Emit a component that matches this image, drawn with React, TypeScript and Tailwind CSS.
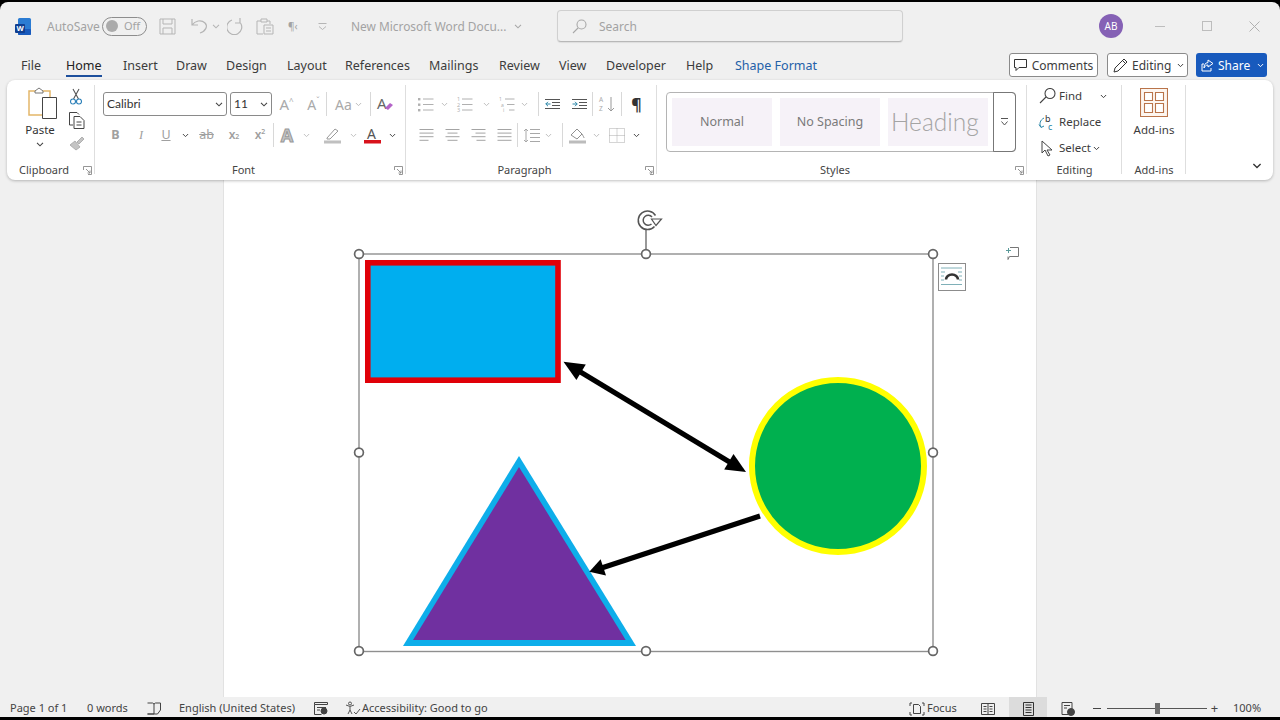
import React from "react";
import { clsx } from "clsx";

const TABS = [
  { name: "File", w: "w-[45px]" },
  { name: "Home", w: "w-[57px]" },
  { name: "Insert", w: "w-[53px]" },
  { name: "Draw", w: "w-[50px]" },
  { name: "Design", w: "w-[61px]" },
  { name: "Layout", w: "w-[58px]" },
  { name: "References", w: "w-[84px]" },
  { name: "Mailings", w: "w-[70px]" },
  { name: "Review", w: "w-[60px]" },
  { name: "View", w: "w-[47px]" },
  { name: "Developer", w: "w-[80px]" },
  { name: "Help", w: "w-[49px]" },
];

const Chev: React.FC<{ className?: string }> = ({ className }) => (
  <svg width="8" height="5" viewBox="0 0 8 5" fill="none" stroke="currentColor" strokeWidth="1.1" className={clsx("shrink-0", className)}>
    <path d="M1 .8l3 3 3-3" />
  </svg>
);

const Cell: React.FC<{ className?: string; children?: React.ReactNode }> = ({ className, children }) => (
  <div className={clsx("flex items-center justify-center shrink-0 h-[24px]", className)}>{children}</div>
);

const Sep = () => <div className="w-px h-[24px] bg-[#d8d8d8] shrink-0" />;

const Launcher = () => (
  <svg width="9" height="9" viewBox="0 0 9 9" fill="none" stroke="#8a8a8a" strokeWidth=".9">
    <path d="M.5 4V.5h8v8H5M3 3l4 4M7 4.5V7H4.5" />
  </svg>
);

const Group: React.FC<{ label: string; className: string; launcher?: boolean; labelClass?: string; children: React.ReactNode }> = ({ label, className, launcher, labelClass, children }) => (
  <div className={clsx("relative flex flex-col shrink-0 h-full", className)}>
    <div className="flex-1 min-h-0">{children}</div>
    <div className="flex h-[20px] items-center text-[11px] text-[#444]">
      <span className={clsx("flex-1", labelClass ?? "text-center")}>{label}</span>
      {launcher && <span className="w-[14px] flex justify-end pr-[3px]"><Launcher /></span>}
    </div>
    <div className="absolute right-0 top-[5px] bottom-[6px] w-px bg-[#dedede]" />
  </div>
);

const Lines: React.FC<{ kind: "left" | "center" | "right" | "just" }> = ({ kind }) => {
  const rows = [[0, 14], [kind === "just" ? 0 : kind === "center" ? 2 : kind === "right" ? 4 : 0, kind === "just" ? 14 : kind === "center" ? 12 : 14], [0, 14], [kind === "left" ? 0 : kind === "center" ? 2 : kind === "right" ? 5 : 0, kind === "left" ? 9 : kind === "center" ? 12 : 14]];
  return (
    <svg width="15" height="14" viewBox="0 0 15 14" stroke="#a4a4a4" strokeWidth="1">
      {rows.map((r, i) => <line key={i} x1={r[0] + .5} x2={r[1] + .5} y1={1.5 + i * 3.6} y2={1.5 + i * 3.6} />)}
    </svg>
  );
};

const ListIcon: React.FC<{ kind: "bullet" | "num" | "multi" }> = ({ kind }) => (
  <svg width="16" height="15" viewBox="0 0 16 15" stroke="#b0b0b0" fill="#b0b0b0" className="overflow-visible">
    {[2, 7.5, 13].map((y, i) => (
      <g key={y}>
        {kind === "bullet" && <rect x="0" y={y - 1} width="2.4" height="2.4" stroke="none" />}
        {kind === "num" && <text x="0" y={y + 2} fontSize="5.5" stroke="none">{i + 1}</text>}
        {kind === "multi" && <text x={i * 2} y={y + 2} fontSize="5" stroke="none">{["1", "a", "i"][i]}</text>}
        <line x1={kind === "multi" ? 6 + i * 2 : 5} x2="15.5" y1={y} y2={y} fill="none" />
      </g>
    ))}
  </svg>
);

const Indent: React.FC<{ out?: boolean }> = ({ out }) => (
  <svg width="15" height="12" viewBox="0 0 15 12" fill="none" strokeWidth="1">
    <path d="M0 1.5h15M7 4.5h8M7 7.5h8M0 10.5h15" stroke="#555" />
    <path d={out ? "M5.5 6H.8M3 3.8L.8 6 3 8.2" : "M.5 6h4.7M3 3.8L5.2 6 3 8.2"} stroke="#2a86a8" />
  </svg>
);

const Diagram = () => (
  <svg viewBox="224 180 812 517" className="block w-[812px] h-[517px]">
    {/* selection frame */}
    <rect x="359" y="254" width="574" height="397.5" fill="none" stroke="#8f8f8f" strokeWidth="1.4" />
    <line x1="646" y1="254" x2="646" y2="230" stroke="#444" strokeWidth="1.1" />
    <g fill="none" stroke="#555" strokeWidth="1.5">
      <path d="M654.500 226.500a9.300 9.300 0 1 1 1-11" />
      <path d="M651.500 224a5 5 0 1 1 .5-7" />
    </g>
    <path d="M651.500 219h10l-5.500 6.500z" fill="#fff" stroke="#555" strokeWidth="1.2" />

    {/* shapes */}
    <rect x="367.8" y="262.8" width="190.2" height="117.4" fill="#00aeef" stroke="#e00008" strokeWidth="5.6" />
    <circle cx="838" cy="466" r="86" fill="#00b04f" stroke="#ffff00" strokeWidth="6" />
    <polygon points="519,456 636,646 403,646" fill="#0eaeea" />
    <polygon points="519,467 625.7,640 413,640" fill="#7030a0" />

    {/* arrows */}
    <line x1="578" y1="370.5" x2="732" y2="463.5" stroke="#000" strokeWidth="5" />
    <polygon points="563.5,361.8 585.8,364.6 576.4,380" fill="#000" />
    <polygon points="746,472 733.5,454 724.2,469.4" fill="#000" />
    <line x1="760" y1="516" x2="600" y2="568.5" stroke="#000" strokeWidth="5" />
    <polygon points="589.3,571.8 606,575.4 600.6,559.2" fill="#000" />

    {[[359, 254], [646, 254], [933, 254], [359, 452.5], [933, 452.5], [359, 651], [646, 651], [933, 651]].map(([x, y]) => (
      <circle key={`${x}-${y}`} cx={x} cy={y} r="4.4" fill="#fff" stroke="#666" strokeWidth="1.7" />
    ))}

    {/* layout options */}
    <rect x="938.5" y="263.5" width="27" height="27" fill="#fff" stroke="#8c8c8c" />
    <path d="M941 268h21M941 272h4M958 272h4M941 276h3M959 276h3M941 280h3M959 280h3M941 284.500h21" stroke="#7fb0b8" fill="none" />
    <path d="M946 279.500a6 5 0 0 1 12 0" stroke="#333" strokeWidth="2.6" fill="none" />

    {/* new comment */}
    <path d="M1010 247.500h8.500v9h-9l-1.500 3v-3" fill="none" stroke="#777" />
    <path d="M1006 250.500h5M1008.500 248v5" stroke="#5a9a9a" />
  </svg>
);

export default function App() {
  return (
    <div className="w-[1280px] h-[720px] bg-black overflow-hidden pt-[2px] pb-[3px] font-['Noto_Sans',sans-serif] text-[#333]">
      <div className="w-full h-full bg-[#f0f0f0] rounded-t-lg flex flex-col overflow-hidden">
        {/* title bar */}
        <div className="h-[47px] shrink-0 flex items-center text-[12px] text-[#a3a3a3] pt-[1px]">
          <svg width="17" height="17" viewBox="0 0 17 17" className="ml-[15px] shrink-0 overflow-visible">
            <rect x="3" y="0" width="13" height="17" rx="1.5" fill="#2b7cd3" />
            <rect x="3" y="11" width="13" height="6" rx="1" fill="#185abd" />
            <rect x="0" y="6" width="10" height="9" rx="1" fill="#103f91" />
            <text x="1.4" y="13" fontSize="7.500" fontWeight="700" fill="#fff">W</text>
          </svg>
          <span className="ml-[15px] w-[55px] shrink-0 mt-[2px]">AutoSave</span>
          <div className="w-[45px] h-[19px] rounded-full border border-[#8d8d8d] flex items-center shrink-0 pl-[3px]">
            <span className="w-[12px] h-[12px] rounded-full bg-[#ababab]" />
            <span className="ml-[6px] text-[11px]">Off</span>
          </div>
          <svg width="17" height="17" viewBox="0 0 17 17" fill="none" stroke="#b5b5b5" className="ml-[12px] shrink-0">
            <path d="M1 1h15v15H1zM4 1v5h9V1M4 16v-6h9v6" />
          </svg>
          <svg width="20" height="16" viewBox="0 0 20 16" fill="none" stroke="#b5b5b5" strokeWidth="1.200" className="ml-[14px] shrink-0">
            <path d="M2 1v6h6M2 7c3-4 9-6 13-2 3 3 1 8-5 10" />
          </svg>
          <Chev className="ml-[2px] text-[#b5b5b5]" />
          <svg width="18" height="18" viewBox="0 0 18 18" fill="none" stroke="#b5b5b5" strokeWidth="1.200" className="ml-[7px] shrink-0">
            <path d="M13 1v5H8M13.500 6A7.500 7.500 0 1 1 5 3" />
          </svg>
          <svg width="18" height="17" viewBox="0 0 18 17" fill="none" stroke="#b5b5b5" className="ml-[11px] shrink-0">
            <path d="M5 3H1v13h6M5 1h6v3H5zM11 3h3v3M8 7h9v9H8zM10 10h5M10 13h5" />
          </svg>
          <span className="ml-[14px] w-[14px] text-[10px] shrink-0">¶‹</span>
          <svg width="9" height="7" viewBox="0 0 9 7" fill="none" stroke="#b5b5b5" className="ml-[16px] shrink-0">
            <path d="M.5 .5h8M1 3.500l3.500 3 3.500-3" />
          </svg>
          <span className="ml-[24px] w-[157px] shrink-0 whitespace-nowrap text-[11.900px] mt-[2px]">New Microsoft Word Docu...</span>
          <Chev className="ml-[5px] text-[#a8a8a8] w-[10px]" />
          <div className="ml-[34px] w-[346px] h-[32px] shrink-0 rounded border border-[#d0d0d0] border-b-[#b8b8b8] bg-[#f0f0f0] flex items-center pl-[14px] shadow-[0_1px_1px_rgba(0,0,0,.08)]">
            <svg width="15" height="15" viewBox="0 0 15 15" fill="none" stroke="#a8a8a8" strokeWidth="1.100">
              <circle cx="9.500" cy="5.500" r="4.500" />
              <path d="M6 9l-5 5" />
            </svg>
            <span className="ml-[12px] mt-[2px]">Search</span>
          </div>
          <div className="ml-[196px] w-[24px] h-[24px] shrink-0 rounded-full bg-[#8561b5] text-white text-[10px] flex items-center justify-center">AB</div>
          <div className="ml-[32px] w-[10px] h-px bg-[#bdbdbd] shrink-0" />
          <div className="ml-[37px] w-[10px] h-[10px] border border-[#bdbdbd] shrink-0" />
          <svg width="11" height="11" viewBox="0 0 11 11" stroke="#b0b0b0" className="ml-[37px] shrink-0">
            <path d="M.5 .5l10 10M10.500 .5l-10 10" />
          </svg>
        </div>

        {/* tabs */}
        <div className="h-[31px] shrink-0 flex items-start pt-[4px] text-[12.500px] text-[#3c3c3c]">
          <div className="flex ml-[21px]">
            {TABS.map(t => (
              <div key={t.name} className={clsx("shrink-0 h-[24px] leading-[26px]", t.w)}>
                <span className={clsx("inline-block h-[24px] whitespace-nowrap", t.name === "Home" && "text-[#222] border-b-2 border-[#1d4f9c]")}>{t.name}</span>
              </div>
            ))}
          </div>
          <span className="text-[#2460a8] h-[24px] leading-[26px] whitespace-nowrap">Shape Format</span>
          <div className="ml-auto flex items-center mr-[13px] text-[12px]">
            <div className="w-[89px] h-[24px] rounded-[3px] border border-[#8a8a8a] bg-white flex items-center justify-center gap-[5px] leading-[24px]">
              <svg width="13" height="12" viewBox="0 0 13 12" fill="none" stroke="#333"><path d="M.5 .5h12v8H5l-3 3v-3H.5z" /></svg>
              <span className="pt-px">Comments</span>
            </div>
            <div className="ml-[9px] w-[81px] h-[24px] rounded-[3px] border border-[#8a8a8a] bg-white flex items-center pl-[5px] gap-[4px]">
              <svg width="15" height="15" viewBox="0 0 15 15" fill="none" stroke="#333"><path d="M1 14l1-4L11 1l3 3-9 9zM9.500 2.500l3 3" /></svg>
              <span className="pt-px">Editing</span>
              <Chev className="ml-[2px] w-[7px]" />
            </div>
            <div className="ml-[8px] w-[71px] h-[24px] rounded-[3px] bg-[#185abd] text-white flex items-center pl-[5px] gap-[4px]">
              <svg width="13" height="13" viewBox="0 0 13 13" fill="none" stroke="#fff"><path d="M3 5H1v7h9V9M7 1l5 3.500L7 8V6C5 6 4 7 3 9c0-3 1-5 4-5.500z" /></svg>
              <span className="pt-px">Share</span>
              <Chev className="ml-[3px] w-[7px]" />
            </div>
          </div>
        </div>

        {/* ribbon */}
        <div className="relative z-10 mx-[7px] h-[100px] shrink-0 bg-white rounded-lg shadow-[0_1px_3px_rgba(0,0,0,.25)] flex text-[#444]">
          <Group label="Clipboard" className="w-[88px]" launcher labelClass="pl-[12px]">
            <div className="flex pt-[7px] h-full">
              <div className="w-[66px] flex flex-col items-center">
                <svg width="30" height="32" viewBox="0 0 30 32" fill="none" className="ml-[5px]">
                  <path d="M1 4h21v24H1z" stroke="#e3b668" strokeWidth="1.500" />
                  <path d="M7 4l4-3 4 3v2H7z" fill="#fff" stroke="#777" />
                  <path d="M14.500 10.500h14v21h-14z" fill="#fff" stroke="#444" />
                </svg>
                <span className="text-[11.500px] leading-[14px] mt-[4px] text-[#333]">Paste</span>
                <Chev className="mt-[5px] text-[#444]" />
              </div>
              <div className="flex flex-col items-start gap-[7px] -ml-[4px]">
                <svg width="12" height="17" viewBox="0 0 12 17" fill="none" strokeWidth="1.100" className="mt-[1px] ml-px">
                  <path d="M3 1l5.500 10M9 1L3.500 11" stroke="#555" />
                  <circle cx="3" cy="13.500" r="2.500" stroke="#2a7fb8" />
                  <circle cx="9" cy="13.500" r="2.500" stroke="#2a7fb8" />
                </svg>
                <svg width="16" height="17" viewBox="0 0 16 17" fill="none" stroke="#444">
                  <path d="M4 13H.5V.5H8l2 2M5 4.500h6l4 4v8H5zM7.500 10h5M7.500 13h5" />
                </svg>
                <svg width="16" height="15" viewBox="0 0 16 15" fill="#c4c4c4" stroke="#b0b0b0">
                  <path d="M1 9l5-4 5 6-4 3zM8 6l5-5 2 2-5 5z" />
                </svg>
              </div>
            </div>
          </Group>

          <Group label="Font" className="w-[311px]" launcher>
            <div className="pl-[8px] pt-[12px] flex flex-col gap-[7px]">
              <div className="flex items-center">
                <div className="w-[124px] h-[24px] rounded-[3px] border border-[#8a8a8a] flex items-center justify-between pl-[3px] pr-[3px] text-[12px] font-['Lato',sans-serif] text-[#333] shrink-0">Calibri<Chev className="text-[#444]" /></div>
                <div className="ml-[3px] w-[42px] h-[24px] rounded-[3px] border border-[#8a8a8a] flex items-center justify-between pl-[3px] pr-[3px] text-[12px] font-['Lato',sans-serif] text-[#333] shrink-0">11<Chev className="text-[#444]" /></div>
                <Cell className="w-[29px] text-[#aaa] text-[15px]"><span>A</span><span className="text-[8px] -mt-[7px]">^</span></Cell>
                <Cell className="w-[25px] text-[#aaa] text-[14px]"><span>A</span><span className="text-[8px] -mt-[7px]">ˇ</span></Cell>
                <Sep />
                <Cell className="w-[43px] text-[#aaa] text-[14px] gap-[3px]"><span>Aa</span><Chev className="text-[#bbb] w-[7px]" /></Cell>
                <Sep />
                <Cell className="w-[28px]">
                  <svg width="17" height="16" viewBox="0 0 17 16" fill="none" className="overflow-visible">
                    <text x="0" y="13" fontSize="15" fill="#666">A</text>
                    <path d="M8 12l5-5 3 2-5 5z" fill="#b464c8" />
                  </svg>
                </Cell>
              </div>
              <div className="flex items-center text-[#a0a0a0]">
                <Cell className="w-[25px] font-bold text-[12.500px]">B</Cell>
                <Cell className="w-[26px] italic text-[12.500px] font-['Liberation_Serif',serif]">I</Cell>
                <Cell className="w-[24px] underline text-[12.500px]">U</Cell>
                <Cell className="w-[14px] text-[#444]"><Chev className="w-[7px]" /></Cell>
                <Cell className="w-[29px] line-through text-[12.500px]">ab</Cell>
                <Cell className="w-[26px] font-semibold text-[12px]"><span>x</span><sub className="text-[7px]">2</sub></Cell>
                <Cell className="w-[26px] font-semibold text-[12px]"><span>x</span><sup className="text-[7px]">2</sup></Cell>
                <Sep />
                <Cell className="w-[26px] text-[18px] leading-[24px] font-bold text-[#c4c4c4] [-webkit-text-stroke:1px_#999]">A</Cell>
                <Cell className="w-[12px] text-[#c0c0c0]"><Chev className="w-[7px]" /></Cell>
                <Cell className="w-[38px] pl-[2px]">
                  <svg width="17" height="17" viewBox="0 0 17 17" fill="none">
                    <path d="M3 11l8-9 3 2-8 8H3z" stroke="#999" />
                    <rect x="0" y="13.500" width="17" height="3" fill="#c0c0c0" />
                  </svg>
                </Cell>
                <Cell className="w-[6px] text-[#c0c0c0] mr-[6px]"><Chev className="w-[7px]" /></Cell>
                <Cell className="w-[28px] -ml-[4px]">
                  <svg width="17" height="17" viewBox="0 0 17 17" className="overflow-visible">
                    <text x="3" y="12" fontSize="14" fill="#555">A</text>
                    <rect x="0" y="13" width="17" height="3.500" fill="#d8121c" />
                  </svg>
                </Cell>
                <Cell className="w-[12px] text-[#444]"><Chev className="w-[7px]" /></Cell>
              </div>
            </div>
          </Group>

          <Group label="Paragraph" className="w-[251px]" launcher>
            <div className="pl-[8px] pt-[12px] flex flex-col gap-[7px]">
              <div className="flex items-center text-[#bdbdbd]">
                <Cell className="w-[23px]"><ListIcon kind="bullet" /></Cell>
                <Cell className="w-[14px]"><Chev className="w-[7px]" /></Cell>
                <Cell className="w-[28px]"><ListIcon kind="num" /></Cell>
                <Cell className="w-[14px]"><Chev className="w-[7px]" /></Cell>
                <Cell className="w-[27px]"><ListIcon kind="multi" /></Cell>
                <Cell className="w-[8px] mr-[10px]"><Chev className="w-[7px]" /></Cell>
                <Sep />
                <Cell className="w-[27px]"><Indent out /></Cell>
                <Cell className="w-[26px]"><Indent /></Cell>
                <Sep />
                <Cell className="w-[28px]">
                  <svg width="17" height="17" viewBox="0 0 17 17" fill="none" stroke="#999" className="overflow-visible">
                    <text x="0" y="6" fontSize="6.500" fill="#aaa" stroke="none">A</text>
                    <text x="0" y="15" fontSize="6.500" fill="#aaa" stroke="none">Z</text>
                    <path d="M12 1v14M9 12l3 3 3-3" />
                  </svg>
                </Cell>
                <Sep />
                <Cell className="w-[29px] text-[16px] leading-[24px] font-bold text-[#333]">¶</Cell>
              </div>
              <div className="flex items-center text-[#bdbdbd]">
                <Cell className="w-[25px]"><Lines kind="left" /></Cell>
                <Cell className="w-[26px]"><Lines kind="center" /></Cell>
                <Cell className="w-[26px]"><Lines kind="right" /></Cell>
                <Cell className="w-[26px]"><Lines kind="just" /></Cell>
                <Sep />
                <Cell className="w-[26px]">
                  <svg width="17" height="15" viewBox="0 0 17 15" fill="none" stroke="#a8a8a8">
                    <path d="M7 1.500h10M7 5.500h10M7 9.500h10M7 13.500h10M3 1v13M1 3l2-2 2 2M1 12l2 2 2-2" />
                  </svg>
                </Cell>
                <Cell className="w-[8px] mr-[10px]"><Chev className="w-[7px]" /></Cell>
                <Sep />
                <Cell className="w-[28px]">
                  <svg width="17" height="17" viewBox="0 0 17 17" fill="none" stroke="#8f8f8f">
                    <path d="M2 8l6-6 5 5-5 5zM13 7c1 2 2 3 2 4" />
                    <rect x="0" y="13.500" width="17" height="3" fill="#bcbcbc" stroke="none" />
                  </svg>
                </Cell>
                <Cell className="w-[10px]"><Chev className="w-[7px]" /></Cell>
                <Cell className="w-[32px]">
                  <svg width="16" height="15" viewBox="0 0 16 15" fill="none" stroke="#aaa" strokeDasharray="1 1">
                    <path d="M.5 .5h15v14H.5zM8 .5v14M.5 7.500h15" />
                  </svg>
                </Cell>
                <Cell className="w-[6px] text-[#444]"><Chev className="w-[7px]" /></Cell>
              </div>
            </div>
          </Group>

          <Group label="Styles" className="w-[370px]" launcher>
            <div className="pl-[9px] pt-[12px]">
              <div className="w-[350px] h-[60px] rounded border border-[#b4b4b4] flex">
                <div className="flex-1 flex gap-[8px] p-[5px] text-[#7a7a7a] text-[12.500px]">
                  <div className="w-[100px] bg-[#f6f2f8] flex items-center justify-center pt-px">Normal</div>
                  <div className="w-[100px] bg-[#f6f2f8] flex items-center justify-center pt-px whitespace-nowrap">No Spacing</div>
                  <div className="w-[100px] bg-[#f6f2f8] flex items-center pl-[3px] text-[24.500px] leading-[30px] text-[#a4a4a4] font-['Lato',sans-serif] font-light">Heading</div>
                </div>
                <div className="w-[24px] -my-px -mr-px rounded-r border border-[#777] flex items-center justify-center">
                  <svg width="9" height="8" viewBox="0 0 9 8" fill="none" stroke="#555"><path d="M1 .5h7M1.500 3.500l3 3.500 3-3.500" /></svg>
                </div>
              </div>
            </div>
          </Group>

          <Group label="Editing" className="w-[95px]">
            <div className="pt-[3px] pl-[12px] text-[11.500px] text-[#3c3c3c] flex flex-col">
              <div className="h-[26px] flex items-center gap-[3px]">
                <svg width="17" height="16" viewBox="0 0 17 16" fill="none" stroke="#444" strokeWidth="1.100"><circle cx="11" cy="5.500" r="5" /><path d="M7 9l-6 6" /></svg>
                <span className="w-[38px]">Find</span>
                <Chev className="w-[7px]" />
              </div>
              <div className="h-[26px] flex items-center gap-[3px]">
                <svg width="17" height="17" viewBox="0 0 17 17" fill="none" className="overflow-visible">
                  <text x="6" y="8" fontSize="9" fill="#333">b</text>
                  <text x="9" y="16" fontSize="9" fill="#2a86a8">c</text>
                  <path d="M5 4C1 6 0 10 2 13M0 10.500l2 3 3-1.500" stroke="#2a86a8" />
                </svg>
                <span>Replace</span>
              </div>
              <div className="h-[26px] flex items-center gap-[3px]">
                <svg width="17" height="17" viewBox="0 0 17 17" fill="none" stroke="#444"><path d="M3 1v12l3-3 3 6 2-1-3-5h5z" /></svg>
                <span>Select</span>
                <Chev className="w-[7px] -ml-px" />
              </div>
            </div>
          </Group>

          <Group label="Add-ins" className="w-[64px]">
            <div className="pt-[8px] flex flex-col items-center">
              <svg width="28" height="29" viewBox="0 0 28 29" fill="none" stroke="#b9744a" strokeWidth="1.100">
                <path d="M.5 .5h27v28H.5z" fill="#fdf6f0" />
                <path d="M4.500 4.500h8v8h-8zM15.500 4.500h8v8h-8zM4.500 15.500h8v9h-8zM15.500 15.500h8v9h-8z" fill="#fff" />
              </svg>
              <span className="text-[11.500px] mt-[4px] text-[#3c3c3c] whitespace-nowrap">Add-ins</span>
            </div>
          </Group>

          <div className="flex-1 flex items-end justify-end pr-[9px] pb-[11px]">
            <Chev className="w-[10px] h-[6px] text-[#333] mr-[2px]" />
          </div>
        </div>

        {/* document */}
        <div className="flex-1 min-h-0 pl-[224px]">
          <div className="w-[812px] h-full bg-white shadow-[0_0_0_1px_#e2e2e2]">
            <Diagram />
          </div>
        </div>

        {/* status bar */}
        <div className="relative h-[20px] shrink-0 flex items-center bg-[#f0f0f0] pt-[3px] text-[11px] text-[#444] whitespace-nowrap">
          <span className="ml-[10px] w-[77px]">Page 1 of 1</span>
          <span className="w-[60px]">0 words</span>
          <svg width="14" height="13" viewBox="0 0 14 13" fill="none" stroke="#444"><path d="M.5 1h5l1.500 1 1.500-1h5v7l-3 4H7V2M7 12H.5z" /></svg>
          <span className="ml-[18px] w-[135px]">English (United States)</span>
          <svg width="14" height="13" viewBox="0 0 14 13" fill="none" stroke="#444"><path d="M.5 .5h13v2H.5zM.5 2.500v10h7M3 5.500h9M3 8h3" /><circle cx="10" cy="9" r="3" fill="#444" /></svg>
          <svg width="16" height="15" viewBox="0 0 16 15" fill="none" stroke="#555" className="ml-[17px]"><circle cx="5" cy="2.500" r="1.500" /><path d="M1 4l4 1.500L9 4M5 6v3l-2 4M5 9l2 4M9 11l2 2 4-5" /></svg>
          <span className="ml-[1px]">Accessibility: Good to go</span>
          <div className="ml-auto flex items-center self-stretch">
            <svg width="16" height="14" viewBox="0 0 16 14" fill="none" stroke="#444"><path d="M4.500 2.500h5l2 2v7h-7zM1 4V1h2M15 4V1h-2M1 10v3h2M15 10v3h-2" /></svg>
            <span className="ml-[2px] w-[54px]">Focus</span>
            <svg width="14" height="12" viewBox="0 0 14 12" fill="none" stroke="#444"><path d="M.5 .5h13v11H.5zM7 .5v11M2.500 3.500h3M2.500 6h3M2.500 8.500h3M8.500 3.500h3M8.500 6h3M8.500 8.500h3" /></svg>
            <div className="ml-[14px] -mt-[3px] w-[38px] h-[20px] bg-[#dcdcdc] flex items-center justify-center pt-[3px]">
              <svg width="11" height="14" viewBox="0 0 11 14" fill="none" stroke="#333"><path d="M.5 .5h10v13H.5zM2.500 3h6M2.500 5.500h6M2.500 8h6M2.500 10.500h6" /></svg>
            </div>
            <svg width="14" height="14" viewBox="0 0 14 14" fill="none" stroke="#444" className="ml-[14px]"><path d="M1 .5h10v7M1 .5v12h6M3 3.500h6M3 6h3" /><circle cx="10" cy="10" r="3.500" fill="#444" /></svg>
            <div className="ml-[18px] w-[8px] h-px bg-[#444]" />
            <div className="relative ml-[6px] w-[100px] h-px bg-[#555]">
              <div className="absolute left-[48px] -top-[5px] w-[5px] h-[11px] bg-[#6e6e6e]" />
            </div>
            <span className="ml-[1px] w-[13px] text-center text-[13px] leading-none">+</span>
            <span className="ml-[12px] w-[47px]">100%</span>
          </div>
        </div>
      </div>
    </div>
  );
}
